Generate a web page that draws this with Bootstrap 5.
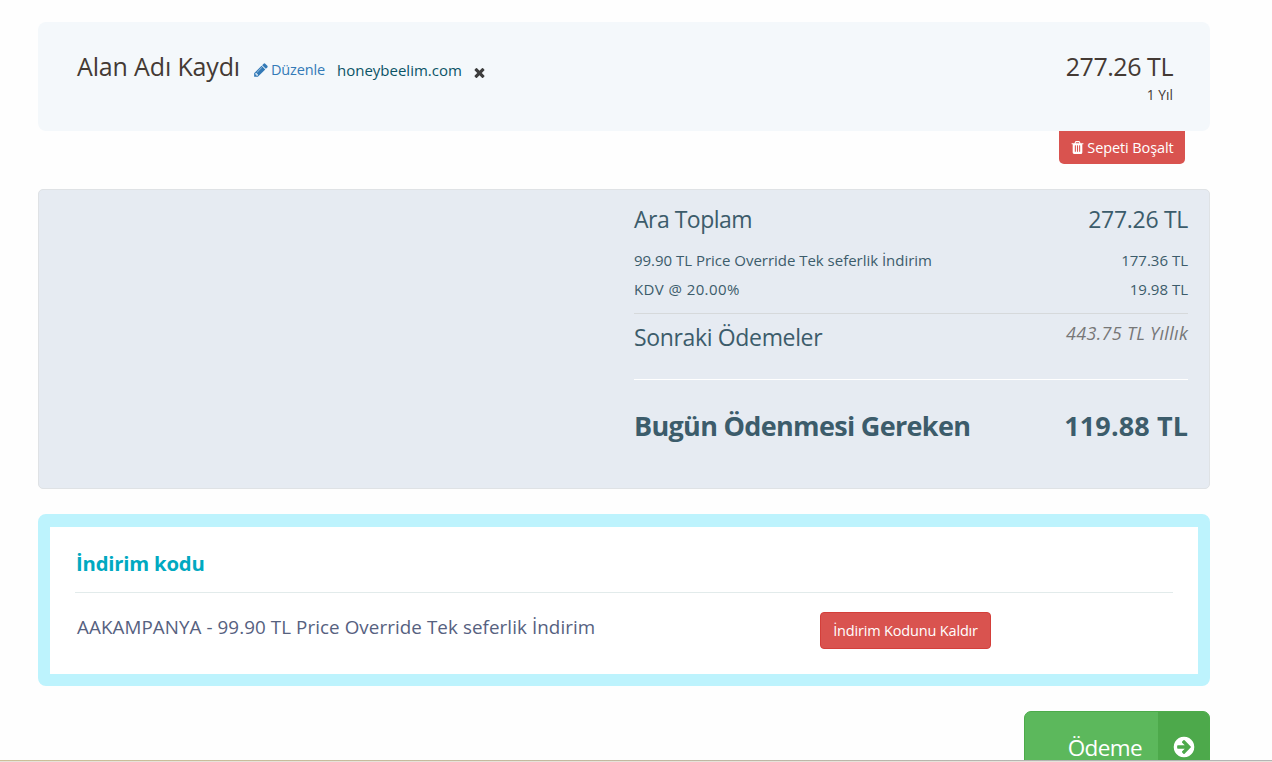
<!DOCTYPE html>
<html lang="tr">
<head>
<meta charset="utf-8">
<meta name="viewport" content="width=device-width, initial-scale=1">
<title>Sepet</title>
<link href="https://cdn.jsdelivr.net/npm/bootstrap@5.3.0/dist/css/bootstrap.min.css" rel="stylesheet">
<style>
body{font-family:"Open Sans","Noto Sans",sans-serif;font-size:15px;background:#fefefe;height:762px;overflow:hidden}
.page{height:760px;padding:22px 62px 0 38px}
.window-edge{height:2px;background:linear-gradient(#fff0 1px,#e6e2da 1px),linear-gradient(90deg,#cdbf98,#c3b8a0 50%,#b4b4b4 85%)}
.ln{line-height:30px;white-space:nowrap}
.item{height:109px;background:#f4f8fb;border-radius:8px;padding:29px 37px 0 39px;color:#443a34}
.item-title{font-size:25px;letter-spacing:-.15px}
.item-price{font-size:25px;letter-spacing:-.45px}
.item-term{font-size:13.8px;line-height:24px;margin-top:2px}
.edit-link{color:#337ab7;font-size:14.5px;letter-spacing:-.15px;margin-left:13px;position:relative;top:-1px}
.edit-link svg{width:16px;height:16px;margin:-2px 2px 0 0}
.domain{color:#0b5466;font-size:15px;margin-left:12px}
.remove{margin-left:10px}
.remove svg{width:15px;height:15px;margin-top:1px}
.btn-empty,.btn-remove{background:#d9534f;color:#fff;font-size:14.5px;line-height:20px;padding:0;border-radius:4px}
.btn-empty{width:126px;height:33px;margin-right:25px;border-radius:0 0 5px 5px;border:0;letter-spacing:-.1px}
.btn-empty svg{width:15px;height:15px;margin:-1px 2px 0 0}
.summary{height:300px;margin-top:25px;background:#e6ebf2;border:1px solid #dfe2e5;border-radius:5px;padding:14px 21px 0 0;color:#3c5c6b}
.totals{width:554px}
.big{font-size:23px}
.minor{line-height:29px}
.next-row{border-top:1px solid #d6d9db;padding:8px 0 27px}
.recurring{font-size:18px;line-height:22px;letter-spacing:.3px;color:#777;white-space:nowrap}
.due{border-top:1px solid #fff;padding-top:28px;font-size:27px;font-weight:700;line-height:36px}
.promo{height:172px;margin-top:25px;border:12px solid #bdf3fd;border-top-width:13px;border-radius:8px;background:#fff;padding:21px 25px 0}
.promo-title{font-size:20.3px;letter-spacing:-.2px;font-weight:700;color:#00a9c1;padding:0 0 14px 1px;border-bottom:1px solid #e2ebeb}
.promo-code{width:745px;padding-left:2px;font-size:18.8px;letter-spacing:.08px;color:#56617f}
.btn-remove{width:171px;height:37px;border:1px solid #d43f3a;letter-spacing:-.17px}
.btn-pay{width:186px;height:70px;margin-top:25px;background:#5cb85c;border:1px solid #4cab4a;border-radius:7px;color:#fff;font-size:22.5px;letter-spacing:-.6px;padding:0}
.btn-pay .arrow{width:51px;background:#4da94b;padding-top:1px}
.btn-pay .arrow svg{width:24px;height:24px}
</style>
</head>
<body>
<main class="page overflow-hidden">
  <section class="item d-flex justify-content-between">
    <div class="d-flex align-items-baseline ln align-self-start">
      <span class="item-title">Alan Adı Kaydı</span>
      <a class="edit-link text-decoration-none" href="#"><svg viewBox="0 0 1792 1792" fill="currentColor"><path d="M491 1536l91-91-235-235-91 91v107h128v128h107zm523-928q0-22-22-22-10 0-17 7l-542 542q-7 7-7 17 0 22 22 22 10 0 17-7l542-542q7-7 7-17zm-54-192l416 416-832 832h-416v-416zm683 96q0 53-37 90l-166 166-416-416 166-165q36-38 90-38 53 0 91 38l235 234q37 39 37 91z"/></svg>Düzenle</a>
      <span class="domain">honeybeelim.com</span>
      <span class="remove"><svg viewBox="0 0 1792 1792" fill="#3d3d3d"><path d="M1490 1322q0 40-28 68l-136 136q-28 28-68 28t-68-28l-294-294-294 294q-28 28-68 28t-68-28l-136-136q-28-28-28-68t28-68l294-294-294-294q-28-28-28-68t28-68l136-136q28-28 68-28t68 28l294 294 294-294q28-28 68-28t68 28l136 136q28 28 28 68t-28 68l-294 294 294 294q28 28 28 68z"/></svg></span>
    </div>
    <div class="text-end">
      <div class="item-price ln">277.26 TL</div>
      <div class="item-term">1 Yıl</div>
    </div>
  </section>
  <div class="d-flex justify-content-end">
    <button class="btn btn-empty d-flex align-items-center justify-content-center"><svg viewBox="0 0 1792 1792" fill="currentColor"><path d="M704 1376v-704q0-14-9-23t-23-9h-64q-14 0-23 9t-9 23v704q0 14 9 23t23 9h64q14 0 23-9t9-23zm256 0v-704q0-14-9-23t-23-9h-64q-14 0-23 9t-9 23v704q0 14 9 23t23 9h64q14 0 23-9t9-23zm256 0v-704q0-14-9-23t-23-9h-64q-14 0-23 9t-9 23v704q0 14 9 23t23 9h64q14 0 23-9t9-23zm-544-992h448l-48-117q-7-9-17-11h-317q-10 2-17 11zm928 32v64q0 14-9 23t-23 9h-96v948q0 83-47 143.5t-113 60.5h-832q-66 0-113-58.5t-47-141.5v-952h-96q-14 0-23-9t-9-23v-64q0-14 9-23t23-9h309l70-167q15-37 54-63t79-26h320q40 0 79 26t54 63l70 167h309q14 0 23 9t9 23z"/></svg>Sepeti Boşalt</button>
  </div>
  <section class="summary d-flex justify-content-end">
    <div class="totals">
      <div class="d-flex justify-content-between ln big">
        <span style="letter-spacing:-.5px">Ara Toplam</span><span style="letter-spacing:-.3px">277.26 TL</span>
      </div>
      <div class="d-flex justify-content-between minor" style="margin-top:12px">
        <span style="letter-spacing:-.02px">99.90 TL Price Override Tek seferlik İndirim</span><span>177.36 TL</span>
      </div>
      <div class="d-flex justify-content-between minor" style="margin-bottom:9px">
        <span style="letter-spacing:.4px">KDV @ 20.00%</span><span>19.98 TL</span>
      </div>
      <div class="d-flex justify-content-between next-row">
        <span class="ln big" style="letter-spacing:-.35px">Sonraki Ödemeler</span><em class="recurring">443.75 TL Yıllık</em>
      </div>
      <div class="d-flex justify-content-between due">
        <span style="letter-spacing:-.68px">Bugün Ödenmesi Gereken</span><span style="letter-spacing:.1px">119.88 TL</span>
      </div>
    </div>
  </section>
  <section class="promo">
    <div class="promo-title ln">İndirim kodu</div>
    <div class="d-flex align-items-start" style="padding-top:19px">
      <div class="promo-code ln">AAKAMPANYA - 99.90 TL Price Override Tek seferlik İndirim</div>
      <button class="btn btn-remove">İndirim Kodunu Kaldır</button>
    </div>
  </section>
  <div class="d-flex justify-content-end">
    <button class="btn btn-pay d-flex overflow-hidden">
      <span class="flex-grow-1 align-self-center text-end pe-3 pt-1">Ödeme</span>
      <span class="arrow d-flex align-items-center justify-content-center align-self-stretch"><svg viewBox="0 0 1792 1792" fill="currentColor"><path d="M1413 896q0-27-18-45l-362-362-91-91q-18-18-45-18t-45 18l-91 91q-18 18-18 45t18 45l189 189h-502q-26 0-45 19t-19 45v128q0 26 19 45t45 19h502l-189 189q-19 19-19 45t19 45l91 91q18 18 45 18t45-18l91-91 362-362q18-18 18-45zm251 0q0 209-103 385.5t-279.5 279.5-385.5 103-385.5-103-279.5-279.5-103-385.5 103-385.5 279.5-279.5 385.5-103 385.5 103 279.5 279.5 103 385.5z"/></svg></span>
    </button>
  </div>
</main>
<div class="window-edge"></div>
<script src="https://cdn.jsdelivr.net/npm/bootstrap@5.3.0/dist/js/bootstrap.bundle.min.js"></script>
</body>
</html>
